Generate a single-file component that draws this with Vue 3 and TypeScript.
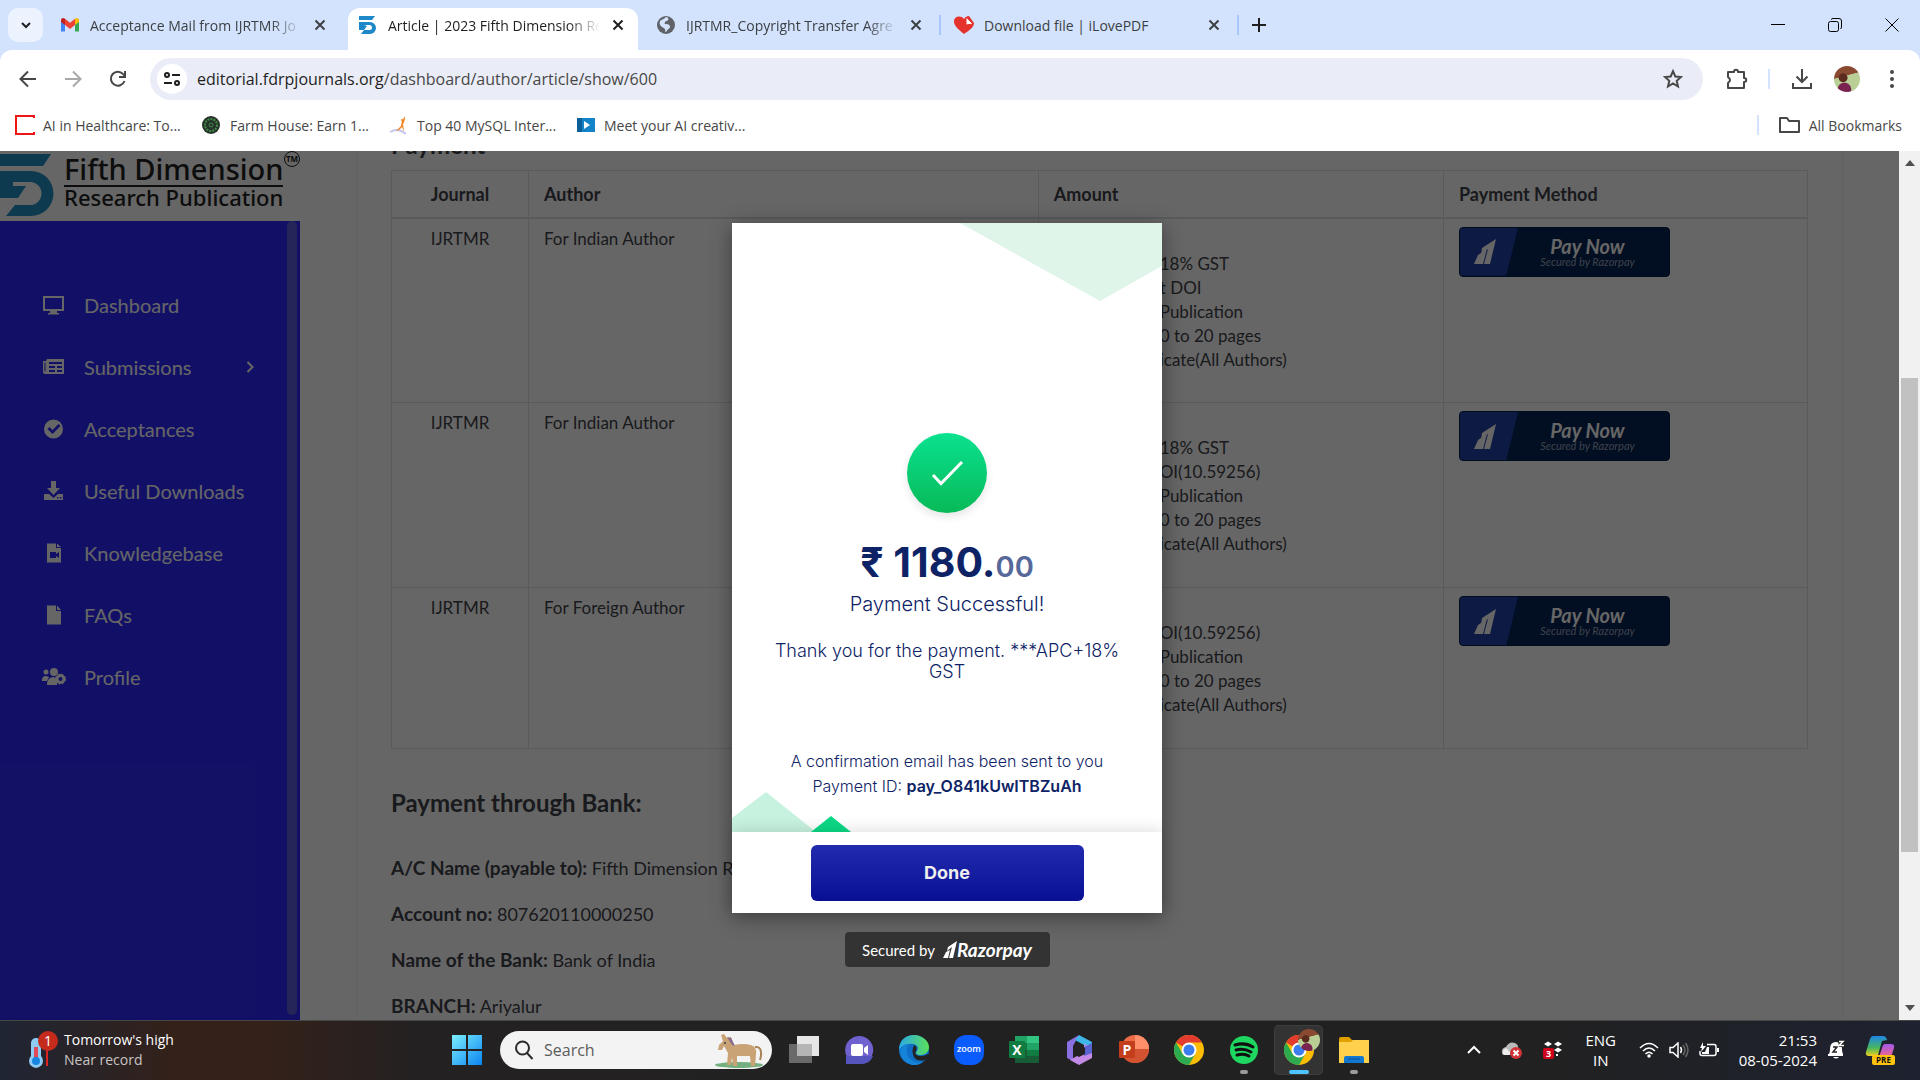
<script setup lang="ts">
interface Tab {
  title: string
  icon: 'gmail' | 'fdrp' | 'globe' | 'heart'
  active?: boolean
}

interface PaymentRow {
  journal: string
  author: string
  lines: string[]
}

const tabs: Tab[] = [
  { title: 'Acceptance Mail from IJRTMR Jo', icon: 'gmail' },
  { title: 'Article | 2023 Fifth Dimension Re', icon: 'fdrp', active: true },
  { title: 'IJRTMR_Copyright Transfer Agre', icon: 'globe' },
  { title: 'Download file | iLovePDF', icon: 'heart' },
]

const bookmarks = [
  { title: 'AI in Healthcare: To...', icon: 'red' },
  { title: 'Farm House: Earn 1...', icon: 'farm' },
  { title: 'Top 40 MySQL Inter...', icon: 'sql' },
  { title: 'Meet your AI creativ...', icon: 'play' },
]

const menu = [
  { label: 'Dashboard', icon: 'desktop' },
  { label: 'Submissions', icon: 'news', expandable: true },
  { label: 'Acceptances', icon: 'check' },
  { label: 'Useful Downloads', icon: 'download' },
  { label: 'Knowledgebase', icon: 'video' },
  { label: 'FAQs', icon: 'file' },
  { label: 'Profile', icon: 'users' },
]

const rows: PaymentRow[] = [
  {
    journal: 'IJRTMR',
    author: 'For Indian Author',
    lines: ['18% GST', 't DOI', 'Publication', '0 to 20 pages', 'icate(All Authors)'],
  },
  {
    journal: 'IJRTMR',
    author: 'For Indian Author',
    lines: ['18% GST', 'OI(10.59256)', 'Publication', '0 to 20 pages', 'icate(All Authors)'],
  },
  {
    journal: 'IJRTMR',
    author: 'For Foreign Author',
    lines: ['OI(10.59256)', 'Publication', '0 to 20 pages', 'icate(All Authors)'],
  },
]

const bank = [
  { label: 'A/C Name (payable to):', value: 'Fifth Dimension R' },
  { label: 'Account no:', value: '807620110000250' },
  { label: 'Name of the Bank:', value: 'Bank of India' },
  { label: 'BRANCH:', value: 'Ariyalur' },
]
</script>

<template>
  <div class="desktop">
    <header class="browser">
      <div class="tabstrip">
        <button class="tab-search" aria-label="Search tabs">
          <svg width="12" height="12" viewBox="0 0 12 12"><path d="M2 4l4 4 4-4" fill="none" stroke="#1f1f1f" stroke-width="2" /></svg>
        </button>
        <template v-for="(tab, i) in tabs" :key="tab.title">
          <div class="tab" :class="{ active: tab.active }">
            <svg v-if="tab.icon === 'gmail'" width="20" height="20" viewBox="0 0 20 20">
              <path d="M1 4v12.500h4V9z" fill="#4285f4" /><path d="M19 4v12.500h-4V9z" fill="#34a853" />
              <path d="M1 5.500C1 3 3.500 2.500 5 3.700V10L1 7z" fill="#c5221f" /><path d="M19 5.500C19 3 16.500 2.500 15 3.700V10l4-3z" fill="#fbbc04" />
              <path d="M5 3.700l5 4 5-4V10l-5 4-5-4z" fill="#ea4335" />
            </svg>
            <svg v-else-if="tab.icon === 'fdrp'" width="20" height="20" viewBox="0 0 20 20">
              <path d="M1 1h16l-3 4H1zM1 7h11a6 6 0 0 1 0 12H3l3-4h5.500a2.500 2.500 0 0 0 0-5H6l3 1-3 4H1z" fill="#1e88c9" />
            </svg>
            <svg v-else-if="tab.icon === 'globe'" width="20" height="20" viewBox="0 0 20 20">
              <circle cx="10" cy="10" r="9" fill="#5f6368" />
              <path d="M4 6c3-2 4-2 6-4 3 0 3 3 1 4-2 0-3 2-2 3 2 0 5 0 5 3 0 2-3 2-3 4l-2 1c1-3-1-4-3-5-2-2-3-3-2-6z" fill="#d3e3fd" />
            </svg>
            <svg v-else width="20" height="20" viewBox="0 0 20 20">
              <path d="M10 19C4 14 0 10.500 0 6.500 0 1 7 0 10 4c1.500-2 3-3 5-3l5 7c0 4-4 7-10 11z" fill="#e5322d" />
              <path d="M12 2l7 7-7 1z" fill="#fff" stroke="#e5322d" />
            </svg>
            <span class="tab-title" :class="{ fade: tab.icon !== 'heart' }">{{ tab.title }}</span>
            <button class="tab-close" :aria-label="'Close ' + tab.title">
              <svg width="12" height="12" viewBox="0 0 12 12"><path d="M1.500 1.500l9 9M10.500 1.500l-9 9" stroke="currentColor" stroke-width="2" /></svg>
            </button>
          </div>
          <span class="tab-sep" :class="{ shown: i > 1 }"></span>
        </template>
        <button class="new-tab" aria-label="New tab">
          <svg width="14" height="14" viewBox="0 0 14 14"><path d="M7 0v14M0 7h14" stroke="#1f1f1f" stroke-width="2" /></svg>
        </button>
        <div class="window-controls">
          <button aria-label="Minimize"><svg width="14" height="14" viewBox="0 0 14 14"><path d="M0 6.500h14" stroke="#000" /></svg></button>
          <button aria-label="Restore"><svg width="14" height="14" viewBox="0 0 14 14" fill="none" stroke="#000"><rect x=".5" y="3.500" width="10" height="10" rx="2" /><path d="M3 1.500Q4 .5 5 .5h6q2.500 0 2.500 2.500v6q0 1-1 2" /></svg></button>
          <button aria-label="Close"><svg width="14" height="14" viewBox="0 0 14 14"><path d="M.5.5l13 13M13.500.5l-13 13" stroke="#000" /></svg></button>
        </div>
      </div>

      <div class="toolbar">
        <button class="tool" aria-label="Back"><svg width="18" height="18" viewBox="0 0 18 18" fill="none" stroke="#474747" stroke-width="2"><path d="M17 9H2M9 1.500L1.500 9 9 16.500" /></svg></button>
        <button class="tool" aria-label="Forward"><svg width="18" height="18" viewBox="0 0 18 18" fill="none" stroke="#a8a8a8" stroke-width="2"><path d="M1 9h15M9 1.500L16.500 9 9 16.500" /></svg></button>
        <button class="tool" aria-label="Reload"><svg width="18" height="18" viewBox="0 0 18 18" fill="none" stroke="#474747" stroke-width="2"><path d="M15.500 11A7 7 0 1 1 14.500 4.500L16 6.500" /><path d="M16 1v6h-6" /></svg></button>
        <div class="omnibox">
          <button class="site-info" aria-label="View site information">
            <svg width="18" height="18" viewBox="0 0 18 18" fill="none" stroke="#1f1f1f" stroke-width="2"><circle cx="4" cy="5" r="2" /><path d="M9 5h8M1 13h8" /><circle cx="14" cy="13" r="2" /></svg>
          </button>
          <span class="url"><b>editorial.fdrpjournals.org</b>/dashboard/author/article/show/600</span>
          <button class="star" aria-label="Bookmark this tab">
            <svg width="20" height="20" viewBox="0 0 20 20"><path d="M10 2.200l2.300 5.300 5.700.5-4.300 3.800 1.300 5.700-5-3-5 3 1.300-5.700L2 8l5.700-.5z" fill="none" stroke="#474747" stroke-width="2" /></svg>
          </button>
        </div>
        <div class="tool-actions">
          <button aria-label="Extensions"><svg width="24" height="24" viewBox="0 0 24 24"><path d="M3 5h6c0-3 4-3 4 0h6v6c3 0 3 4 0 4v6H3v-5q4-3 0-6z" fill="none" stroke="#474747" stroke-width="2" stroke-linejoin="round" /></svg></button>
          <span class="tool-sep"></span>
          <button aria-label="Downloads"><svg width="22" height="22" viewBox="0 0 22 22" fill="none" stroke="#474747" stroke-width="2"><path d="M11 1v13M5.500 8.500L11 14l5.500-5.500M2 15v5h18v-5" /></svg></button>
          <button aria-label="Profile"><span class="avatar"></span></button>
          <button aria-label="Menu"><svg width="6" height="20" viewBox="0 0 6 20" fill="#474747"><circle cx="3" cy="3" r="2" /><circle cx="3" cy="10" r="2" /><circle cx="3" cy="17" r="2" /></svg></button>
        </div>
      </div>

      <nav class="bookmarks" aria-label="Bookmarks">
        <a v-for="mark in bookmarks" :key="mark.title" class="bookmark" href="#">
          <svg width="20" height="20" viewBox="0 0 20 20">
            <path v-if="mark.icon === 'red'" d="M19 3V1H1v18h18v-2" fill="none" stroke="#f01414" stroke-width="2" />
            <g v-else-if="mark.icon === 'farm'"><circle cx="9" cy="10" r="9" fill="#26332a" /><circle cx="9" cy="10" r="6" fill="none" stroke="#3f8a45" stroke-width="2" stroke-dasharray="2 1" /><circle cx="9" cy="10" r="2" fill="none" stroke="#3f8a45" /></g>
            <g v-else-if="mark.icon === 'sql'"><path d="M1 17q8-5 16 2" fill="none" stroke="#c5c5ee" stroke-width="2" /><path d="M16 1q0 6-2 8l1 8-2-5-3 3-3 1 5-5 1-5z" fill="#f58220" /><circle cx="13" cy="5" r="1" fill="#f58220" /></g>
            <g v-else><rect x="1" y="3" width="18" height="14" fill="#1583c7" /><path d="M1 3h5v14H1z" fill="#0d5f9c" /><path d="M8 6l6 4-6 4z" fill="#fff" /></g>
          </svg>
          {{ mark.title }}
        </a>
        <a class="bookmark all" href="#">
          <svg width="22" height="20" viewBox="0 0 22 20"><path d="M1 17V3h7l2 3h10v11z" fill="none" stroke="#474747" stroke-width="2" stroke-linejoin="round" /></svg>
          All Bookmarks
        </a>
      </nav>
    </header>

    <div class="viewport">
      <div class="page">
        <aside class="sidebar">
          <div class="brand">
            <svg width="54" height="64" viewBox="0 0 54 64"><path d="M0 1h51l-8 12H0zM0 18h31a22.500 22.500 0 0 1 0 45H6l9-11h15a11.500 11.500 0 0 0 0-23H13v4h13l-8 12H0z" fill="#2292c4" /></svg>
            <div class="brand-text"><span class="brand-top">Fifth Dimension</span><span class="brand-sub">Research Publication</span></div>
            <span class="tm">TM</span>
          </div>
          <nav class="side-nav">
            <a v-for="item in menu" :key="item.label" class="side-link" href="#">
              <svg class="side-icon" width="24" height="20" viewBox="0 0 24 20" fill="currentColor">
                <path v-if="item.icon === 'desktop'" fill-rule="evenodd" d="M1 1h21v15h-7v2h2v1.500H6V18h2v-2H1zm2 2v11h17V3z" />
                <path v-else-if="item.icon === 'news'" fill-rule="evenodd" d="M5 2h17v15H3q-2 0-2-2V4h3zM7 5v2h13V5zM7 9v2h6V9zM15 9v2h5V9zM7 13v2h6v-2zM15 13v2h5v-2zM2.500 5.500v9h1v-9z" />
                <path v-else-if="item.icon === 'check'" fill-rule="evenodd" d="M11.500 .5a9.500 9.500 0 1 1 0 19 9.500 9.500 0 0 1 0-19zm-6 9.500l5 5 8-8-2-2-6 6-3-3z" />
                <path v-else-if="item.icon === 'download'" fill-rule="evenodd" d="M9 0h5v7h4l-6.500 7L5 7h4zM2 13h5l4.500 4 4.500-4h5v6H2zm13 3v1.500h1.500V16zm3 0v1.500h1.500V16z" />
                <path v-else-if="item.icon === 'video'" fill-rule="evenodd" d="M5 .5h9V5h5v14.500H5zM15 .5L19 4h-4zM8 9v6h6v-2l3 2V9l-3 2V9z" />
                <path v-else-if="item.icon === 'file'" d="M5 .5h9V6h5v13.500H5zM15 .5L19 5h-4z" />
                <g v-else>
                  <circle cx="4" cy="5" r="2.500" /><circle cx="12" cy="5" r="4" /><path d="M0 13q0-4 4-4l3 1-2 4H0zM5 18q0-8 7-8l3 3v5z" />
                  <circle cx="18.500" cy="12" r="3.500" fill="none" stroke="currentColor" stroke-width="3" /><circle cx="18.500" cy="12" r="5" fill="none" stroke="currentColor" stroke-width="1" stroke-dasharray="2 2" />
                </g>
              </svg>
              <span>{{ item.label }}</span>
              <svg v-if="item.expandable" class="caret" width="8" height="12" viewBox="0 0 8 12"><path d="M1.500 1l5 5-5 5" fill="none" stroke="currentColor" stroke-width="2" /></svg>
            </a>
          </nav>
          <span class="side-scroll"></span>
        </aside>

        <main class="content">
          <section class="card">
            <h2>Payment</h2>
            <table class="fees">
              <colgroup><col class="c-journal" /><col class="c-author" /><col /><col class="c-method" /></colgroup>
              <thead>
                <tr><th class="center">Journal</th><th>Author</th><th>Amount</th><th>Payment Method</th></tr>
              </thead>
              <tbody>
                <tr v-for="(row, i) in rows" :key="i">
                  <td class="center">{{ row.journal }}</td>
                  <td>{{ row.author }}</td>
                  <td>
                    <ul class="amount"><li v-for="line in row.lines" :key="line">{{ line }}</li></ul>
                  </td>
                  <td>
                    <button class="pay">
                      <span class="pay-mark"><svg width="22" height="25" viewBox="0 0 22 25" fill="#fff"><path d="M8 9L22 0l-6 25h-6l4-15-7 5zM4 16l9-6-4 15H0z" /></svg></span>
                      <span class="pay-text"><span class="pay-now">Pay Now</span><span class="pay-by">Secured by Razorpay</span></span>
                    </button>
                  </td>
                </tr>
              </tbody>
            </table>
            <h2 class="bank-title">Payment through Bank:</h2>
            <p v-for="item in bank" :key="item.label" class="bank-line"><b>{{ item.label }}</b> {{ item.value }}</p>
          </section>
        </main>

        <div class="overlay">
          <section class="modal" role="dialog" aria-label="Payment result">
            <div class="modal-body">
              <svg class="confetti" viewBox="0 0 430 609" aria-hidden="true">
                <path d="M228 0h202v43l-62 35z" fill="#dff5e9" />
                <path d="M0 595l34-26 50 40H0z" fill="#c7f2df" />
                <path d="M79 609l20-16 20 16z" fill="#0bd884" />
              </svg>
              <span class="tick"><svg width="34" height="28" viewBox="0 0 34 28"><path d="M3 16l8 8.500L32 3" fill="none" stroke="#fff" stroke-width="3" /></svg></span>
              <p class="sum">₹ 1180.<small>00</small></p>
              <p class="status">Payment Successful!</p>
              <p class="thanks">Thank you for the payment. ***APC+18% GST</p>
              <p class="confirm">A confirmation email has been sent to you<br />Payment ID: <b>pay_O841kUwITBZuAh</b></p>
            </div>
            <footer class="modal-foot"><button class="done">Done</button></footer>
          </section>
          <div class="secured">
            <span>Secured by</span>
            <span class="rzp"><svg width="14" height="18" viewBox="0 0 14 18" fill="#fff"><path d="M5 6l9-6-4 17H6l3-11-5 4zM3 11l4-2-2 8H0z" /></svg>Razorpay</span>
          </div>
        </div>
      </div>
      <div class="scrollbar">
        <svg width="10" height="6" viewBox="0 0 10 6"><path d="M5 0l5 6H0z" fill="#505050" /></svg>
        <span class="track"><span class="thumb"></span></span>
        <svg width="10" height="6" viewBox="0 0 10 6"><path d="M5 6l5-6H0z" fill="#505050" /></svg>
      </div>
    </div>

    <footer class="taskbar">
      <div class="weather">
        <svg width="34" height="40" viewBox="0 0 34 40">
          <path d="M4 13a5 5 0 0 1 10 0v13a7 7 0 1 1-10 0z" fill="#8ecbf5" /><path d="M7 17h4v14H7z" fill="#e0485a" /><circle cx="9" cy="31" r="4" fill="#1786e0" />
          <path d="M20 18v18" stroke="#d22" stroke-width="2" /><circle cx="21" cy="11" r="10" fill="#c42b1c" />
          <text x="21" y="16" text-anchor="middle" fill="#fff" font-size="14">1</text>
        </svg>
        <div class="weather-text"><span>Tomorrow's high</span><span class="muted">Near record</span></div>
      </div>
      <div class="dock">
        <button class="start" aria-label="Start">
          <svg width="30" height="30" viewBox="0 0 30 30"><defs><linearGradient id="win" x2="1" y2="1"><stop stop-color="#7cf0ff" /><stop offset="1" stop-color="#0a84f0" /></linearGradient></defs><path d="M0 0h14v14H0zM16 0h14v14H16zM0 16h14v14H0zM16 16h14v14H16z" fill="url(#win)" /></svg>
        </button>
        <label class="search">
          <svg width="20" height="20" viewBox="0 0 20 20" fill="none" stroke="#2b2b2b" stroke-width="2"><circle cx="8.500" cy="8" r="6.500" /><path d="M13 13l5.500 6" /></svg>
          <input type="text" placeholder="Search" aria-label="Search" />
          <svg width="50" height="38" viewBox="0 0 50 38">
            <ellipse cx="25" cy="34" rx="24" ry="3" fill="#74b07f" />
            <path d="M9 10L7 4l3-1 3 4 4-1 3 8q9-2 17 0 6 2 5 9l-1 12h-4l-1-10-13 0v10h-4l-1-9-1 8h-4l1-12-4-7-2 4-4 0 1-5z" fill="#c9a375" />
            <path d="M41 16q7-1 6 9l-1 4" fill="none" stroke="#a98458" stroke-width="2" /><path d="M13 6l4 1 4 8-3-1z" fill="#8a6a8e" /><circle cx="11" cy="12" r="1" fill="#345" />
          </svg>
        </label>
        <button class="app" aria-label="Task view">
          <svg width="30" height="30" viewBox="0 0 30 30"><path d="M8 1h22v20H8z" fill="#e6e6e6" /><path d="M0 9h23v19H0z" fill="#777" opacity=".85" /><path d="M8 9h15v12H8z" fill="#b5b5b5" /></svg>
        </button>
        <button class="app" aria-label="Chat">
          <svg width="30" height="30" viewBox="0 0 30 30"><path d="M15 1a14 14 0 1 1-5 27l-8 1 1-7A14 14 0 0 1 15 1z" fill="#6f62cf" /><path d="M2 21h27q-3 8-12 8H2z" fill="#5654bd" /><rect x="7" y="9" width="12" height="12" rx="2" fill="#fff" /><path d="M20 13l4-3v10l-4-3z" fill="#fff" /></svg>
        </button>
        <button class="app" aria-label="Edge">
          <svg width="30" height="30" viewBox="0 0 30 30"><defs><linearGradient id="edge" x2="1"><stop stop-color="#2aa8e8" /><stop offset="1" stop-color="#5be05a" /></linearGradient></defs><circle cx="15" cy="15" r="15" fill="#0f6fc6" /><path d="M0 15C0 5 7 0 15 0s15 6 15 12c0 5-4 8-8 8-5 0-6-2-4-4 3-5-2-8-8-7-5 0-8 3-10 6z" fill="url(#edge)" /><path d="M15 10q4 2 2 6c-2 3 1 5 5 5q4 0 7-2l1 2-4 4q-8 2-11-3-3-6 0-12z" fill="#232122" /><path d="M9 9q-4 12 5 17 6 3 11 0-5 5-12 4Q2 27 1 16q2-6 8-7z" fill="#1584d8" /></svg>
        </button>
        <button class="app" aria-label="Zoom">
          <svg width="30" height="30" viewBox="0 0 30 30"><rect width="30" height="30" rx="12" fill="#0b5cff" /><text x="15" y="17" text-anchor="middle" fill="#fff" font-size="9" font-weight="600">zoom</text></svg>
        </button>
        <button class="app" aria-label="Excel">
          <svg width="30" height="30" viewBox="0 0 30 30"><path d="M6 1h24v27H6z" fill="#21a366" /><path d="M18 1h12v7H18z" fill="#33c481" /><path d="M6 8h12v7H6zM18 15h12v6H18z" fill="#107c41" /><path d="M6 15h12v13H6zM18 21h12v7H18z" fill="#185c37" /><rect y="6" width="16" height="17" rx="1" fill="#107c41" /><text x="8" y="20" text-anchor="middle" fill="#fff" font-size="14" font-weight="700">X</text></svg>
        </button>
        <button class="app" aria-label="Microsoft 365">
          <svg width="30" height="30" viewBox="0 0 30 30"><path d="M15 0L3 7v16l6 3V11z" fill="#8a6fe0" /><path d="M15 0l13 7v13l-8-4v-6l-9-5z" fill="#3fb6e8" /><path d="M28 12v11l-13 7-9-5 14-8V9z" fill="#c48be6" /><path d="M28 8v10l-8 3v-9z" fill="#5a62cf" /><path d="M15 9l6 4v6l-6 3-6-3v-6z" fill="#232122" /></svg>
        </button>
        <button class="app" aria-label="PowerPoint">
          <svg width="30" height="30" viewBox="0 0 30 30"><circle cx="16" cy="14" r="14" fill="#ed6c47" /><path d="M16 0a14 14 0 0 1 14 14H16z" fill="#ff8f6b" /><path d="M2 14h28a14 14 0 0 1-28 0z" fill="#d35230" /><rect y="6" width="16" height="17" rx="1" fill="#c43e1c" /><text x="8" y="20" text-anchor="middle" fill="#fff" font-size="14" font-weight="700">P</text></svg>
        </button>
        <button class="app" aria-label="Chrome">
          <svg width="30" height="30" viewBox="0 0 30 30"><circle cx="15" cy="15" r="15" fill="#fbbc04" /><path d="M15 15L2 7.500A15 15 0 0 1 28 7.500H15z" fill="#e33b2e" /><path d="M2 7.500A15 15 0 0 0 15 30l6.500-11.500L15 22 8.500 18.500z" fill="#2da94f" /><circle cx="15" cy="15" r="7.500" fill="#fff" /><circle cx="15" cy="15" r="5.500" fill="#3b7ded" /></svg>
        </button>
        <button class="app running" aria-label="Spotify">
          <svg width="30" height="30" viewBox="0 0 30 30"><circle cx="15" cy="15" r="14" fill="#1ed760" /><path d="M6 10q10-3 18 2M7 15q8-2 15 2M8 20q7-2 12 1" fill="none" stroke="#101010" stroke-width="3" stroke-linecap="round" /></svg>
        </button>
        <button class="app running current" aria-label="Chrome, active">
          <svg width="30" height="30" viewBox="0 0 30 30"><circle cx="15" cy="15" r="15" fill="#fbbc04" /><path d="M15 15L2 7.500A15 15 0 0 1 28 7.500H15z" fill="#e33b2e" /><path d="M2 7.500A15 15 0 0 0 15 30l6.500-11.500L15 22 8.500 18.500z" fill="#2da94f" /><circle cx="15" cy="15" r="7.500" fill="#fff" /><circle cx="15" cy="15" r="5.500" fill="#3b7ded" /></svg>
          <span class="avatar small"></span>
        </button>
        <button class="app running" aria-label="File Explorer">
          <svg width="30" height="30" viewBox="0 0 30 30"><path d="M0 4q0-2 2-2h8l3 3h14v8H0z" fill="#e0a100" /><path d="M0 7h12l2-2h16v23H0z" fill="#ffd04c" /><path d="M5 28v-5q0-2 2-2h16q2 0 2 2v5z" fill="#1278cf" /><path d="M9 24h12" stroke="#0a4f96" /></svg>
        </button>
      </div>
      <div class="tray">
        <svg width="14" height="9" viewBox="0 0 14 9"><path d="M1 8l6-6 6 6" fill="none" stroke="#fff" stroke-width="2" /></svg>
        <svg width="22" height="18" viewBox="0 0 22 18"><path d="M1 12q-1-5 4-6 3-6 9-4 4 2 3 6l-9 6H4q-3 0-3-2z" fill="#b9b9b9" /><path d="M3 14q-3-4 2-7l6 6-3 1z" fill="#eee" /><circle cx="15" cy="12" r="6" fill="#d13438" /><path d="M12.500 9.500l5 5M17.500 9.500l-5 5" stroke="#fff" stroke-width="2" /></svg>
        <svg width="20" height="20" viewBox="0 0 20 20"><path d="M1 4l4-2.500L9 4 5 6.500zM11 4l4-2.500L19 4l-4 2.500zM11 10l4-2.500 4 2.500-4 2.500zM13 14h2v2h-2z" fill="#fff" /><rect y="8" width="11" height="11" rx="2" fill="#d0021b" /><text x="5.500" y="17" text-anchor="middle" fill="#fff" font-size="9" font-weight="700">3</text></svg>
        <div class="lang"><span>ENG</span><span>IN</span></div>
        <div class="net">
          <svg width="20" height="16" viewBox="0 0 20 16" fill="none" stroke="#fff" stroke-width="1.500"><path d="M1 6q9-9 18 0M4 9q6-6 12 0M6.500 12q3.500-3.500 7 0" /><circle cx="10" cy="14" r="1" fill="#fff" /></svg>
          <svg width="20" height="16" viewBox="0 0 20 16" fill="none" stroke="#fff" stroke-width="1.500"><path d="M1 5.500h3L9 1v14l-5-4.500H1z" /><path d="M11.500 5q2 3 0 6" /><path d="M14 3q4 5 0 10M16.500 1q5 7 0 14" stroke="#666" /></svg>
          <svg width="20" height="16" viewBox="0 0 20 16"><path d="M8 2.500h7q2 0 2 2v7q0 2-2 2H3q-2 0-2-2V9" fill="none" stroke="#fff" stroke-width="1.500" /><path d="M3 10h3l2-5h2v7H3zM18 6h2v4h-2zM4 0L1 6h2L2 10l5-6H4z" fill="#fff" /></svg>
        </div>
        <div class="notify">
          <div class="clock"><span>21:53</span><span>08-05-2024</span></div>
          <svg width="18" height="20" viewBox="0 0 18 20"><path d="M2 14q1-1 1-5 0-7 6-7t6 7q0 4 1 5v2H1v-2zM6 17h6q-3 3-6 0z" fill="#fff" /><path d="M6 7h4l-4 5h4" fill="none" stroke="#222" stroke-width="1.500" /><path d="M11 0h7v7h-6z" fill="#222" /><path d="M12 1.500h4l-4 4h5" fill="none" stroke="#fff" stroke-width="1.500" /></svg>
        </div>
        <svg width="30" height="30" viewBox="0 0 30 30"><defs><linearGradient id="cop" x2="0" y2="1"><stop stop-color="#1d86e8" /><stop offset=".6" stop-color="#49b85c" /><stop offset="1" stop-color="#f2cf1d" /></linearGradient><linearGradient id="cop2" x2="0" y2="1"><stop stop-color="#a558e8" /><stop offset="1" stop-color="#f0668e" /></linearGradient></defs><path d="M8 1h10q3 0 4 4l-5 1-4 14q-1 1-3 1H4q-4 0-3-4L5 4q1-3 3-3z" fill="url(#cop)" /><path d="M20 9h6q4 0 3 4l-3 9H14l3-9q1-4 3-4z" fill="url(#cop2)" /><rect x="7" y="20" width="23" height="10" rx="2" fill="#ffc20e" /><text x="18.500" y="28" text-anchor="middle" fill="#111" font-size="8" font-weight="700">PRE</text></svg>
      </div>
    </footer>
  </div>
</template>

<style>
body {
  margin: 0;
}
</style>

<style scoped>
* {
  box-sizing: border-box;
}
.desktop {
  display: flex;
  flex-direction: column;
  height: 100vh;
  overflow: hidden;
  font-family: 'Open Sans', 'Noto Sans', sans-serif;
  font-size: 14px;
  color: #1f1f1f;
}
button {
  display: flex;
  align-items: center;
  justify-content: center;
  padding: 0;
  border: 0;
  background: none;
  font: inherit;
  color: inherit;
}
a {
  color: inherit;
  text-decoration: none;
}
p,
h2,
ul {
  margin: 0;
  padding: 0;
}
svg {
  flex: none;
}

/* browser chrome */
.browser {
  flex: none;
  background: #d3e3fd;
}
.tabstrip {
  display: flex;
  align-items: center;
  height: 50px;
  padding-left: 8px;
}
.tab-search {
  width: 35px;
  height: 34px;
  margin-right: 7px;
  border-radius: 10px;
  background: #ecf3fe;
}
.tab {
  display: flex;
  align-items: center;
  flex: 0 1 290px;
  min-width: 0;
  height: 42px;
  margin-top: 8px;
  padding: 0 12px 8px 10px;
  gap: 10px;
  color: #3c4043;
}
.tab.active {
  border-radius: 12px 12px 0 0;
  background: #fff;
  color: #1f1f1f;
}
.tab-title {
  flex: 1;
  overflow: hidden;
  white-space: nowrap;
}
.fade {
  mask-image: linear-gradient(to right, #000 85%, transparent);
}
.tab-close {
  width: 16px;
  height: 16px;
}
.tab-sep {
  flex: none;
  width: 2px;
  height: 20px;
  margin: 0 3px;
}
.tab-sep.shown {
  background: #a8c7fa;
}
.new-tab {
  width: 34px;
  height: 34px;
}
.window-controls {
  display: flex;
  margin-left: auto;
}
.window-controls button {
  width: 57px;
  height: 48px;
}
.toolbar {
  display: flex;
  align-items: center;
  height: 57px;
  padding: 0 6px 0 5px;
  border-radius: 12px 12px 0 0;
  background: #fff;
}
.tool {
  width: 45px;
  height: 40px;
}
.omnibox {
  display: flex;
  align-items: center;
  flex: 1;
  height: 42px;
  margin-left: 10px;
  padding: 0 20px 0 7px;
  border-radius: 21px;
  background: #eaedf7;
}
.site-info {
  width: 30px;
  height: 30px;
  margin-right: 10px;
  border-radius: 50%;
  background: #fff;
}
.url {
  flex: 1;
  font-size: 16px;
  color: #474747;
}
.url b {
  font-weight: 400;
  color: #1f1f1f;
}
.tool-actions {
  display: flex;
  align-items: center;
  margin-left: 11px;
}
.tool-actions button {
  width: 45px;
  height: 40px;
}
.tool-sep {
  width: 2px;
  height: 20px;
  margin: 0 9px;
  background: #d3e3fd;
}
.avatar {
  width: 26px;
  height: 26px;
  border-radius: 50%;
  background:
    radial-gradient(circle at 40% 90%, #7a2350 22%, transparent 26%),
    radial-gradient(circle at 35% 45%, #5b2b20 18%, transparent 22%),
    linear-gradient(165deg, #8a4a32 38%, #b9cf95 40%);
}
.avatar.small {
  position: absolute;
  top: 4px;
  right: 3px;
  width: 22px;
  height: 22px;
}
.bookmarks {
  display: flex;
  align-items: center;
  height: 44px;
  padding: 0 18px 8px 15px;
  background: #fff;
  color: #474747;
}
.bookmark {
  display: flex;
  align-items: center;
  flex: 0 1 187px;
  gap: 8px;
  white-space: nowrap;
}
.bookmark.all {
  flex: none;
  margin-left: auto;
  padding-left: 20px;
  border-left: 2px solid #d3e3fd;
}

/* web page */
.viewport {
  display: flex;
  flex: 1;
  min-height: 0;
}
.page {
  position: relative;
  display: flex;
  flex: 1;
  min-width: 0;
  overflow: hidden;
  background: #fff;
  font-family: Lato, 'Open Sans', sans-serif;
  font-size: 17px;
  line-height: 24px;
  color: #3f4349;
}
.sidebar {
  position: relative;
  display: flex;
  flex-direction: column;
  flex: none;
  width: 300px;
}
.brand {
  position: relative;
  display: flex;
  gap: 10px;
  height: 70px;
  padding-top: 2px;
  font-family: 'Noto Sans', sans-serif;
  color: #222;
}
.brand-text {
  display: flex;
  flex-direction: column;
}
.brand-top {
  border-bottom: 2px solid #222;
  font-size: 29px;
  line-height: 32px;
  font-weight: 500;
}
.brand-sub {
  font-size: 22px;
  line-height: 20px;
  font-weight: 500;
}
.tm {
  position: absolute;
  top: 0;
  right: 0;
  width: 16px;
  border: 1px solid #222;
  border-radius: 50%;
  font-size: 8px;
  line-height: 14px;
  font-weight: 700;
  text-align: center;
}
.side-nav {
  flex: 1;
  padding-top: 53px;
  background: #2d2aff;
  color: #fff;
  font-size: 20px;
}
.side-link {
  display: flex;
  align-items: center;
  height: 62px;
  padding: 0 46px 0 42px;
}
.side-icon {
  margin-right: 18px;
}
.caret {
  margin-left: auto;
}
.side-scroll {
  position: absolute;
  top: 70px;
  right: 3px;
  bottom: 5px;
  width: 10px;
  border-radius: 5px;
  background: #5d5de1;
}
.content {
  flex: 1;
  min-width: 0;
  margin-top: -20px;
  padding: 0 56px;
}
.card {
  padding: 0 34px;
  border: solid #f3f3f3;
  border-width: 0 1px;
}
h2 {
  font-size: 24px;
  line-height: 28px;
  font-weight: 700;
}
.fees {
  width: 100%;
  margin-top: 11px;
  border-collapse: collapse;
  table-layout: fixed;
}
.c-journal {
  width: 137px;
}
.c-author {
  width: 36%;
}
.c-method {
  width: 364px;
}
.fees th,
.fees td {
  padding: 8px 15px;
  border: 1px solid #dee2e6;
  text-align: left;
  vertical-align: top;
}
.fees th {
  height: 47px;
  border-bottom-width: 2px;
  font-size: 18px;
  vertical-align: middle;
}
.fees .center {
  text-align: center;
}
.fees tbody tr {
  height: 185px;
}
.fees tbody tr:last-child {
  height: 161px;
}
.amount {
  padding: 25px 0 0 106px;
  list-style: none;
  white-space: nowrap;
}
.pay {
  width: 211px;
  height: 50px;
  overflow: hidden;
  border: 1px solid #04204f;
  border-radius: 4px;
  background: #052355;
  color: #fff;
  font-style: italic;
}
.pay-mark {
  display: flex;
  align-items: center;
  width: 58px;
  height: 100%;
  padding-left: 14px;
  background: #2142a8;
  clip-path: polygon(0 0, 100% 0, 80% 100%, 0 100%);
}
.pay-text {
  display: flex;
  flex: 1;
  flex-direction: column;
  align-items: center;
  padding-right: 18px;
  padding-left: 6px;
  white-space: nowrap;
}
.pay-now {
  font-size: 20px;
  line-height: 20px;
  font-weight: 700;
}
.pay-by {
  font-size: 11px;
  line-height: 12px;
  color: #9aa5ba;
}
.bank-title {
  margin: 40px 0 39px;
}
.bank-line {
  margin-bottom: 22px;
  font-size: 18px;
}
.bank-line b {
  font-size: 19px;
}

/* checkout overlay */
.overlay {
  position: absolute;
  inset: 0;
  display: flex;
  flex-direction: column;
  align-items: center;
  gap: 19px;
  padding: 72px 5px 0 0;
  background: rgba(0, 0, 0, 0.6);
  font-family: Inter, sans-serif;
  color: #0d2366;
}
.modal {
  width: 430px;
  background: #fff;
  box-shadow: 0 4px 20px rgba(0, 0, 0, 0.4);
  text-align: center;
}
.modal-body {
  position: relative;
  display: flex;
  flex-direction: column;
  align-items: center;
  height: 609px;
  padding: 210px 40px 0;
  font-weight: 300;
}
.confetti {
  position: absolute;
  inset: 0;
}
.tick {
  display: flex;
  align-items: center;
  justify-content: center;
  width: 80px;
  height: 80px;
  border-radius: 50%;
  background: linear-gradient(#0ae18f, #08b958);
  box-shadow: 0 4px 8px rgba(0, 0, 0, 0.1);
}
.sum {
  margin-top: 25px;
  font-size: 41px;
  line-height: 48px;
  font-weight: 700;
}
.sum small {
  font-size: 29px;
  font-weight: 600;
  color: #566799;
}
.status {
  margin-top: 1px;
  font-size: 20px;
  line-height: 24px;
}
.thanks {
  margin-top: 24px;
  font-size: 18px;
  line-height: 21px;
}
.confirm {
  margin-top: 67px;
  font-size: 16px;
  line-height: 25px;
}
.confirm b {
  font-weight: 600;
}
.modal-foot {
  position: relative;
  display: flex;
  justify-content: center;
  padding: 13px 0 12px;
  background: #fff;
  box-shadow: 0 -4px 12px rgba(0, 0, 0, 0.1);
}
.done {
  width: 273px;
  height: 56px;
  border-radius: 6px;
  background: linear-gradient(#222bae, #080f92);
  color: #eee;
  font-size: 18px;
  font-weight: 700;
}
.secured {
  display: flex;
  align-items: center;
  justify-content: center;
  gap: 8px;
  width: 205px;
  height: 35px;
  border-radius: 4px;
  background: #333;
  color: #fff;
  font-family: Lato, sans-serif;
  font-size: 15px;
}
.rzp {
  display: flex;
  align-items: center;
  font-size: 19px;
  font-weight: 700;
  font-style: italic;
}
.scrollbar {
  display: flex;
  flex-direction: column;
  align-items: center;
  flex: none;
  width: 21px;
  padding: 9px 0;
  background: #f1f1f1;
}
.track {
  display: flex;
  flex-direction: column;
  flex: 1;
  padding-top: 212px;
}
.thumb {
  flex: 0 1 474px;
  width: 17px;
  background: #c1c1c1;
}

/* taskbar */
.taskbar {
  display: flex;
  align-items: center;
  flex: none;
  height: 60px;
  padding-bottom: 2px;
  border-top: 1px solid #464646;
  background: linear-gradient(to right, #1f2534, #33211a 9%, #33211a 14%, #232122 22%, #212121 80%, #1e2230);
  color: #fff;
}
.weather {
  display: flex;
  align-items: center;
  flex: 0 1 440px;
  gap: 3px;
  padding-left: 27px;
}
.weather-text,
.lang,
.clock {
  display: flex;
  flex-direction: column;
  line-height: 20px;
}
.muted {
  color: #c8c4c2;
}
.dock {
  display: flex;
  align-items: center;
}
.start {
  width: 54px;
  height: 50px;
}
.search {
  display: flex;
  align-items: center;
  width: 272px;
  height: 38px;
  margin: 0 4px 0 6px;
  padding: 0 8px 0 14px;
  border-radius: 19px;
  background: #f3f3f3;
}
.search input {
  flex: 1;
  min-width: 0;
  margin-left: 10px;
  padding: 0;
  border: 0;
  outline: 0;
  background: none;
  font: inherit;
  font-size: 16px;
}
.search input::placeholder {
  color: #5c5c5c;
  opacity: 1;
}
.app {
  position: relative;
  width: 49px;
  height: 50px;
  margin: 0 3px;
  border-radius: 5px;
}
.running::after {
  content: '';
  position: absolute;
  bottom: 1px;
  width: 8px;
  height: 4px;
  border-radius: 2px;
  background: #9a9a9a;
}
.current {
  background: #333;
  box-shadow: inset 0 0 0 1px #3d3d3d;
}
.current::after {
  width: 20px;
  background: #4cc2ff;
}
.tray {
  display: flex;
  align-items: center;
  gap: 20px;
  margin-left: auto;
  padding-right: 25px;
  font-size: 15px;
}
.lang {
  align-items: center;
  width: 36px;
}
.net,
.notify {
  display: flex;
  align-items: center;
  gap: 10px;
}
.clock {
  align-items: flex-end;
}
</style>
